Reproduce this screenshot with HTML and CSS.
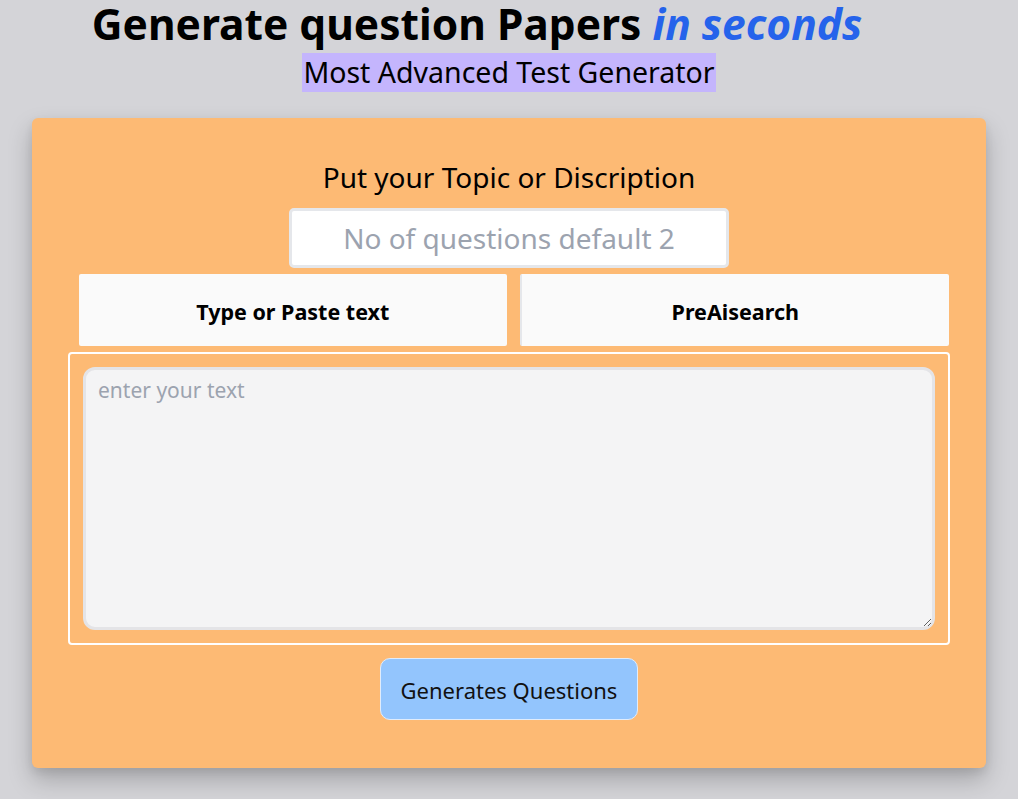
FILE: index.html
```html
<!DOCTYPE html>
<html>
<head>
<meta charset="utf-8">
<link rel="stylesheet" href="styles.css">
</head>
<body>
<div class="page">
  <h1 class="title">Generate question Papers <em class="accent">in seconds</em></h1>
  <div class="subtitle-row"><span class="subtitle">Most Advanced Test Generator</span></div>
  <div class="card">
    <div class="topic">Put your Topic or Discription</div>
    <input class="count" type="text" placeholder="No of questions default 2">
    <div class="tabs">
      <button class="tab">Type or Paste text</button>
      <button class="tab tab-right">PreAisearch</button>
    </div>
    <div class="area-wrap">
      <textarea class="area" placeholder="enter your text"></textarea>
    </div>
    <button class="generate">Generates Questions</button>
  </div>
</div>
</body>
</html>
```
FILE: styles.css
```css
* { box-sizing: border-box; }
html, body { margin: 0; padding: 0; }
body {
  background: #d4d4d8;
  font-family: "Noto Sans", "Open Sans", sans-serif;
  color: #000;
  height: 799px;
  overflow: hidden;
}
.page {
  display: flex;
  flex-direction: column;
  align-items: center;
}
.title {
  margin: 0;
  font-size: 42.5px;
  line-height: 48px;
  font-weight: 700;
  padding-right: 64px;
  white-space: nowrap;
}
.accent { color: #2563eb; font-style: italic; }
.subtitle-row { margin-top: 5px; }
.subtitle {
  display: inline-block;
  background: #c4b5fd;
  font-size: 28.5px;
  line-height: 39px;
  padding: 0 1px;
}
.card {
  margin-top: 26px;
  width: 954px;
  height: 650px;
  background: #fdba74;
  border-radius: 6px;
  box-shadow: 0 12px 24px rgba(0,0,0,0.22), 0 4px 8px rgba(0,0,0,0.08);
  display: flex;
  flex-direction: column;
  align-items: center;
  padding: 40px 36px 0 36px;
}
.topic {
  font-size: 28px;
  line-height: 38px;
}
.count {
  margin-top: 12px;
  width: 440px;
  height: 60px;
  border: 3px solid #e5e7eb;
  border-radius: 5px;
  background: #fff;
  font-family: inherit;
  font-size: 28px;
  text-align: center;
  outline: none;
}
.count::placeholder { color: #9ca3af; }
.tabs {
  margin-top: 6px;
  margin-left: 10px;
  display: flex;
  gap: 13px;
  width: 870px;
}
.tab {
  flex: 1;
  height: 72px;
  padding-top: 4px;
  background: #fafafa;
  border: none;
  border-radius: 2px;
  font-family: inherit;
  font-size: 21.5px;
  font-weight: 700;
  color: #000;
}
.tab-right { border-left: 2px solid #e5e7eb; }
.area-wrap {
  margin-top: 6px;
  width: 882px;
  height: 293px;
  border: 2px solid #fff;
  border-radius: 4px;
  padding: 13px;
  display: flex;
}
.area {
  flex: 1;
  background: #f4f4f5;
  border: 3px solid #e4e4e7;
  border-radius: 12px;
  font-family: inherit;
  font-size: 21px;
  padding: 6px 12px;
  resize: vertical;
  outline: none;
}
.area::placeholder { color: #9ca3af; }
.generate {
  margin-top: 13px;
  width: 258px;
  height: 62px;
  padding-top: 3px;
  background: #93c5fd;
  border: 1px solid #e0ecfb;
  border-radius: 10px;
  font-family: inherit;
  font-size: 22px;
  color: #111;
}
```
